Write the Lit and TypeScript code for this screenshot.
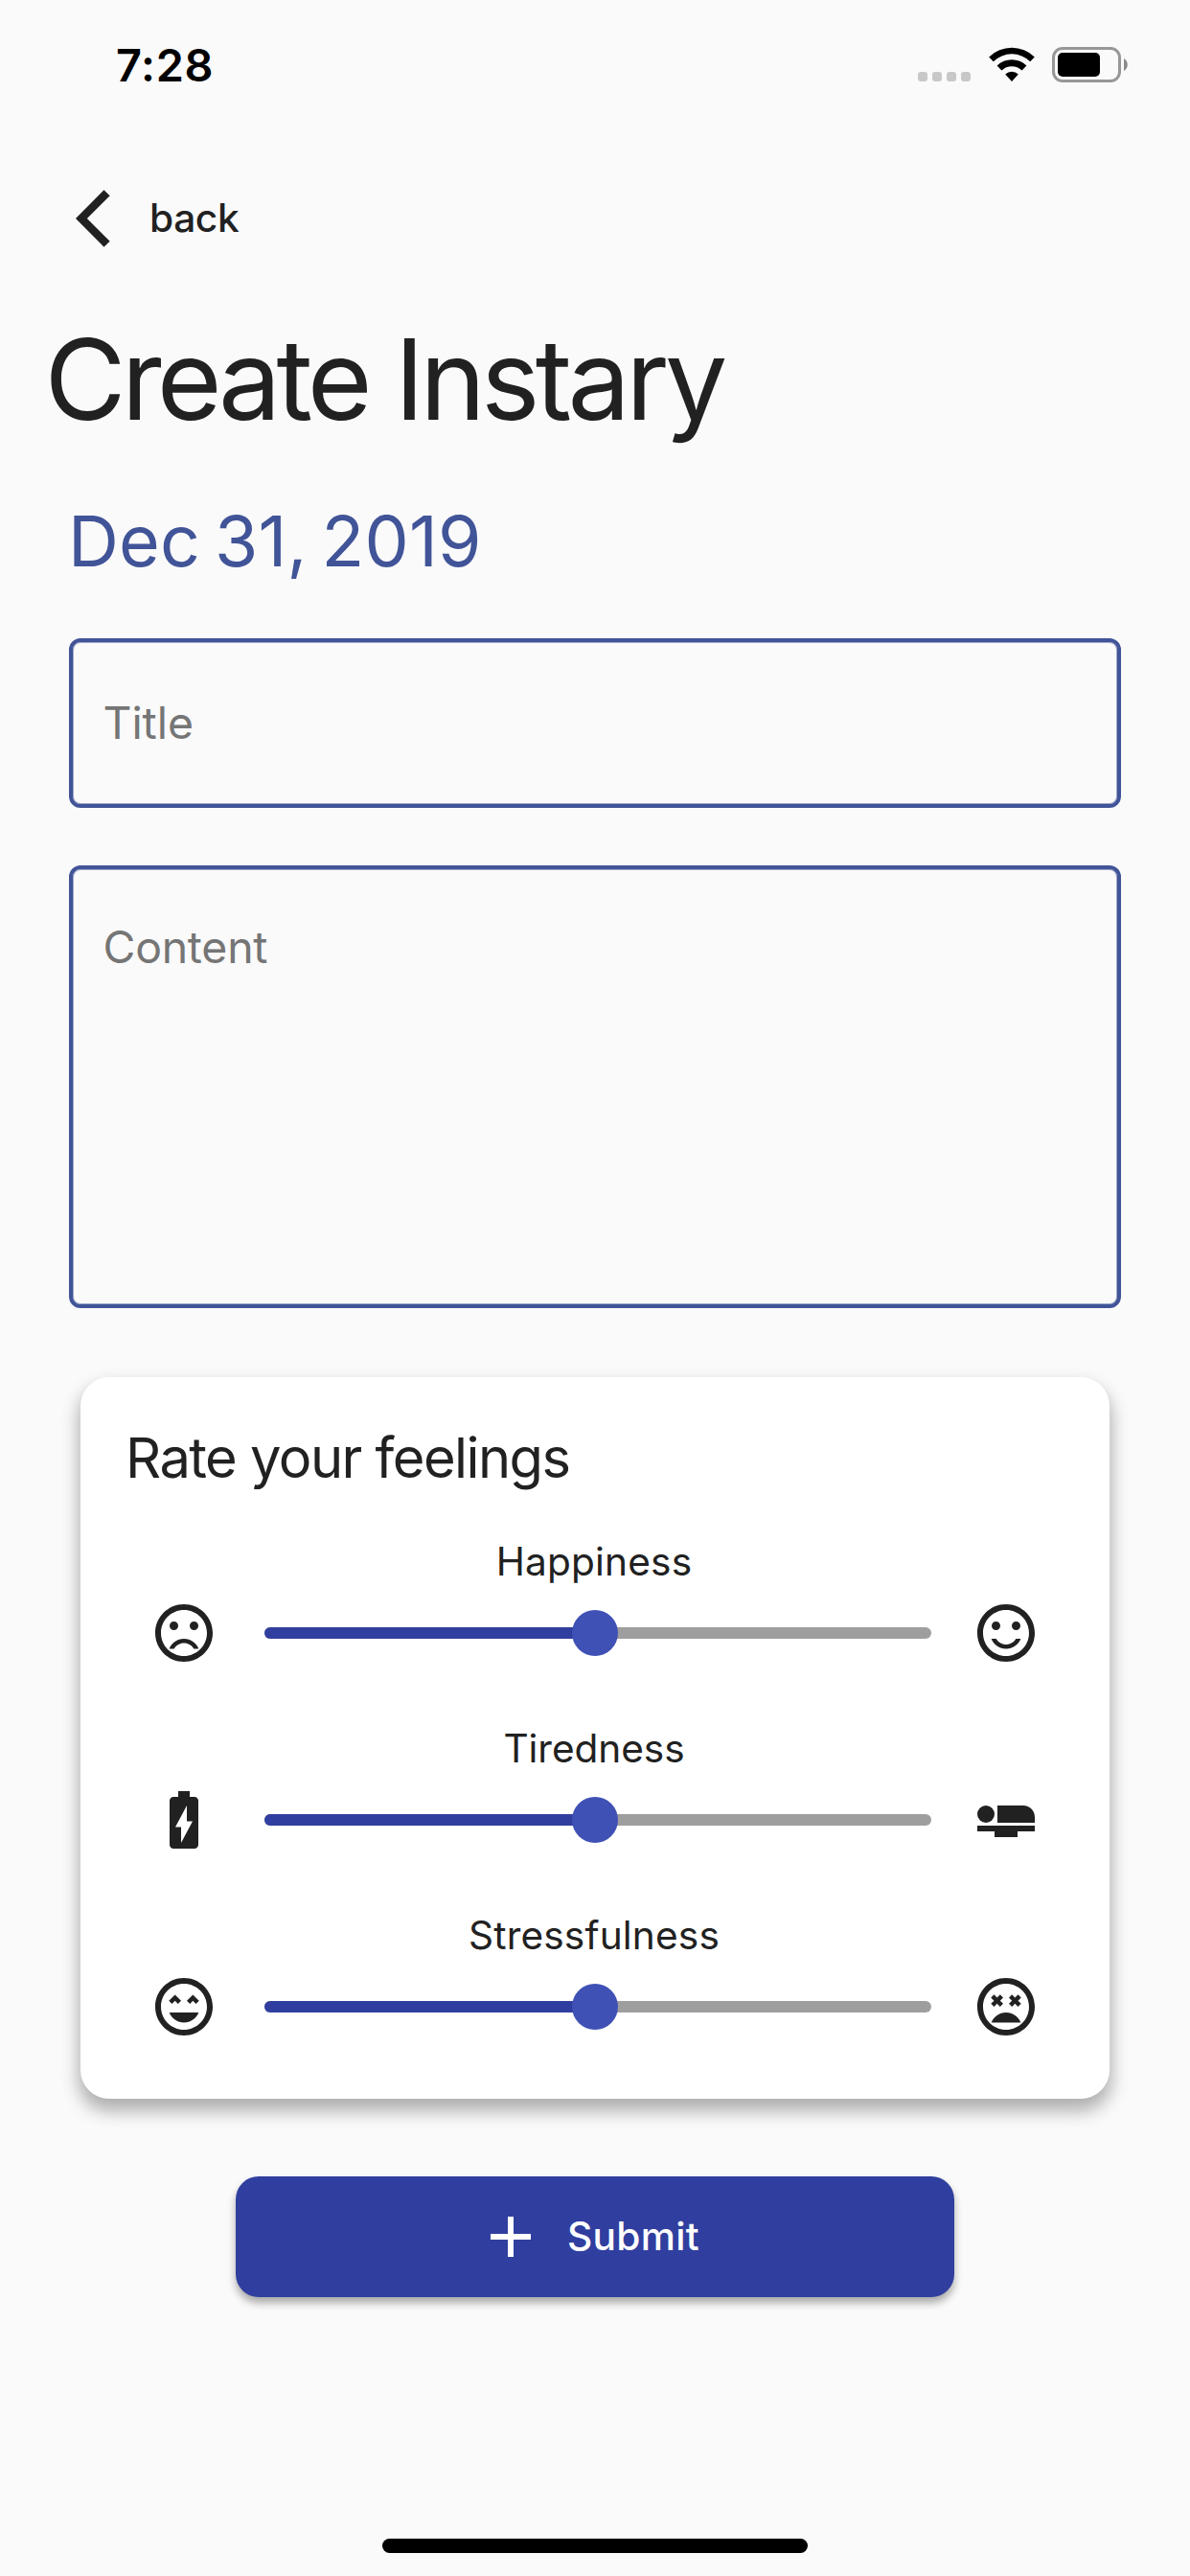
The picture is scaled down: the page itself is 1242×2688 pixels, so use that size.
import { LitElement, html, css, svg } from "lit";
import { customElement, property } from "lit/decorators.js";

const RING =
  "M11.99 2C6.47 2 2 6.48 2 12s4.47 10 9.99 10C17.52 22 22 17.52 22 12S17.52 2 11.99 2zM12 20c-4.42 0-8-3.58-8-8s3.58-8 8-8 8 3.58 8 8-3.58 8-8 8z";
const EYES =
  "M7 9.5a1.5 1.5 0 1 0 3 0a1.5 1.5 0 1 0 -3 0zM14 9.5a1.5 1.5 0 1 0 3 0a1.5 1.5 0 1 0 -3 0z";

const ICONS: Record<string, string[]> = {
  back: ["M11.88 4.05L9.83 2.12 0 12l9.83 9.88 2.05-1.93L3.95 12z"],
  add: ["M19 13h-6v6h-2v-6H5v-2h6V5h2v6h6v2z"],
  sad: [
    RING,
    EYES,
    "M12 14c-2.33 0-4.32 1.45-5.12 3.5h1.67c.69-1.19 1.97-2 3.45-2s2.75.81 3.45 2h1.67c-.8-2.05-2.79-3.5-5.12-3.5z",
  ],
  happy: [
    RING,
    EYES,
    "M12 16c-1.48 0-2.75-.81-3.45-2H6.88c.8 2.05 2.79 3.5 5.12 3.5s4.32-1.45 5.12-3.5h-1.67c-.7 1.19-1.97 2-3.45 2z",
  ],
  charged: [
    "M15.67 4H14V2h-4v2H8.33C7.6 4 7 4.6 7 5.33v15.33C7 21.4 7.6 22 8.33 22h7.33c.74 0 1.34-.6 1.34-1.33V5.33C17 4.6 16.4 4 15.67 4zM11 20v-5.5H9L13 7v5.5h2L11 20z",
  ],
  bed: [
    "M22 11v2H9V7h9c2.21 0 4 1.79 4 4zM2 14v2h6v2h8v-2h6v-2H2z",
    "M2 10a3 3 0 1 0 6 0a3 3 0 1 0 -6 0z",
  ],
  calm: [
    RING,
    "M13 9.94L14.06 11l1.06-1.06L16.18 11l1.06-1.06-2.12-2.12zM8.88 9.94L9.94 11 11 9.94 8.88 7.82 6.76 9.94 7.82 11z",
    "M12 17.5c2.33 0 4.31-1.46 5.11-3.5H6.89c.8 2.04 2.78 3.5 5.11 3.5z",
  ],
  stressed: [
    RING,
    "M16.18 7.76l-1.06 1.06-1.06-1.06L13 8.82l1.06 1.06L13 10.94 14.06 12l1.06-1.06L16.18 12l1.06-1.06-1.06-1.06 1.06-1.06zM7.82 12l1.06-1.06L9.94 12 11 10.94 9.94 9.88 11 8.82 9.94 7.76 8.88 8.82 7.82 7.76 6.76 8.82l1.06 1.06-1.06 1.06z",
    "M12 14c-2.33 0-4.31 1.46-5.11 3.5h10.22c-.8-2.04-2.78-3.5-5.11-3.5z",
  ],
};

@customElement("md-icon")
class MdIcon extends LitElement {
  @property() name = "";
  static styles = css`
    :host {
      display: block;
      flex: none;
      width: 72px;
      height: 72px;
    }
    .glyph {
      display: block;
      width: 72px;
      height: 72px;
      fill: currentColor;
    }
  `;
  render() {
    return html`<svg class="glyph" viewBox="0 0 24 24">
      ${(ICONS[this.name] ?? []).map((d) => svg`<path d=${d}></path>`)}
    </svg>`;
  }
}

@customElement("status-bar")
class StatusBar extends LitElement {
  static styles = css`
    :host {
      display: flex;
      justify-content: space-between;
      box-sizing: border-box;
      height: 132px;
      padding: 38px 64px 0 121px;
      color: #000;
    }
    .time {
      font-size: 46.8px;
      line-height: 60px;
      font-weight: 600;
      letter-spacing: 0.68px;
    }
    .indicators {
      display: flex;
      align-items: flex-start;
      padding-top: 11px;
    }
    .signal {
      display: flex;
      gap: 5px;
      padding-top: 26px;
    }
    .dot {
      width: 10px;
      height: 10px;
      border-radius: 3px;
      background: #c8c8c8;
    }
    .wifi {
      width: 48px;
      height: 36px;
      margin-left: 18.5px;
    }
    .battery {
      width: 80px;
      height: 37px;
      margin-left: 18.5px;
    }
  `;
  render() {
    return html`
      <div class="time">7:28</div>
      <div class="indicators">
        <div class="signal">
          ${[0, 1, 2, 3].map(() => html`<span class="dot"></span>`)}
        </div>
        <svg class="wifi" viewBox="0 0 48 36">
          <path d="M0.2 10.4A34 34 0 0 1 47.8 10.4L43.2 15.2A27.4 27.4 0 0 0 4.8 15.2Z"></path>
          <path d="M8.6 19.4A22.2 22.2 0 0 1 39.4 19.4L34.6 24.4A15.4 15.4 0 0 0 13.4 24.4Z"></path>
          <path d="M17.2 28.4A10.2 10.2 0 0 1 30.8 28.4L24 36Z"></path>
        </svg>
        <svg class="battery" viewBox="0 0 80 37">
          <rect x="1.5" y="1.5" width="69" height="34" rx="9.5" fill="none" stroke="#979797" stroke-width="3"></rect>
          <rect x="6" y="6" width="44" height="25" rx="5"></rect>
          <path d="M75 12C80 14.5 80 22.5 75 25Z" fill="#8a8a8a"></path>
        </svg>
      </div>
    `;
  }
}

@customElement("feeling-slider")
class FeelingSlider extends LitElement {
  @property() label = "";
  @property() low = "";
  @property() high = "";
  @property({ type: Number }) value = 50;
  @property({ type: Number }) tracking = 0;
  static styles = css`
    :host {
      display: block;
      height: 195px;
    }
    .label {
      height: 60px;
      padding-top: 1px;
      padding-right: 2px;
      line-height: 60px;
      font-size: 40.6px;
      text-align: center;
    }
    .row {
      display: flex;
      align-items: center;
      justify-content: space-between;
      height: 72px;
      margin-top: 8px;
      padding: 0 72px;
    }
    .track {
      display: flex;
      align-items: center;
      width: 696px;
      height: 12px;
      border-radius: 6px;
      background: #9e9e9e;
      margin-left: 6px;
    }
    .fill {
      height: 12px;
      border-radius: 6px 0 0 6px;
      background: #303f9f;
    }
    .thumb {
      flex: none;
      width: 48px;
      height: 48px;
      margin-left: -24px;
      border-radius: 50%;
      background: #3f51b5;
    }
  `;
  render() {
    return html`
      <div class="label" style="letter-spacing:${this.tracking}px">${this.label}</div>
      <div class="row">
        <md-icon name=${this.low}></md-icon>
        <div class="track">
          <div class="fill" style="width:${(this.value / 100) * 690}px"></div>
          <div class="thumb"></div>
        </div>
        <md-icon name=${this.high}></md-icon>
      </div>
    `;
  }
}

@customElement("app-root")
class AppRoot extends LitElement {
  static styles = css`
    :host {
      display: flex;
      flex-direction: column;
      box-sizing: border-box;
      width: 1242px;
      height: 2688px;
      overflow: hidden;
      background: #fafafa;
      color: #212121;
      font-family: Inter, "Liberation Sans", sans-serif;
    }
    .back {
      display: flex;
      align-items: center;
      height: 72px;
      margin: 60px 0 0 78.5px;
    }
    .back-label {
      margin-left: 5.5px;
      font-size: 40.7px;
      line-height: 70px;
      font-weight: 500;
      letter-spacing: -0.4px;
    }
    .heading {
      margin: 62px 0 0 46.5px;
      height: 140px;
      line-height: 140px;
      font-size: 116.4px;
      font-weight: 400;
      letter-spacing: -4.8px;
    }
    .date {
      margin: 49px 0 0 71px;
      height: 100px;
      line-height: 100px;
      font-size: 73.3px;
      letter-spacing: 0.2px;
      word-spacing: -6px;
      color: #415498;
    }
    .field {
      box-sizing: border-box;
      margin: 0 72px;
      padding: 0 31.5px;
      border: 4px solid #415498;
      border-radius: 12px;
      box-shadow: inset 0 0 0 1px rgba(65, 84, 152, 0.5);
      font-size: 46.4px;
      line-height: 60px;
      color: #757575;
    }
    .title {
      height: 177px;
      margin-top: 51px;
      padding-top: 54px;
      letter-spacing: -0.05px;
    }
    .content {
      height: 462px;
      margin-top: 60px;
      padding-top: 51px;
      letter-spacing: -0.25px;
    }
    .card {
      box-sizing: border-box;
      height: 753px;
      margin: 72px 84px 0;
      padding-top: 44px;
      border-radius: 30px;
      background: #fff;
      box-shadow: 0 11px 18px 2px rgba(0, 0, 0, 0.3);
    }
    .card-title {
      height: 80px;
      margin: 0 0 38px 47px;
      line-height: 80px;
      font-size: 57.8px;
      font-weight: 400;
      letter-spacing: -1.53px;
    }
    .submit {
      display: flex;
      align-items: center;
      align-self: center;
      box-sizing: border-box;
      width: 750px;
      height: 126px;
      margin-top: 81px;
      padding-left: 250.5px;
      border-radius: 24px;
      background: #303f9f;
      color: #fff;
      box-shadow: 0 6px 8px rgba(0, 0, 0, 0.33);
    }
    .submit-label {
      margin-left: 23.5px;
      font-size: 40.7px;
      line-height: 60px;
      font-weight: 550;
      letter-spacing: 0.27px;
    }
    .home-indicator {
      align-self: center;
      width: 444px;
      height: 15px;
      margin: auto 0 24px;
      border-radius: 7.5px;
      background: #000;
    }
  `;
  render() {
    return html`
      <status-bar></status-bar>
      <div class="back">
        <md-icon name="back"></md-icon>
        <span class="back-label">back</span>
      </div>
      <h1 class="heading">Create Instary</h1>
      <div class="date">Dec 31, 2019</div>
      <div class="field title">Title</div>
      <div class="field content">Content</div>
      <section class="card">
        <h2 class="card-title">Rate your feelings</h2>
        <feeling-slider label="Happiness" low="sad" high="happy" tracking="0.19"></feeling-slider>
        <feeling-slider label="Tiredness" low="charged" high="bed" tracking="-0.06"></feeling-slider>
        <feeling-slider label="Stressfulness" low="calm" high="stressed" tracking="0.18"></feeling-slider>
      </section>
      <div class="submit">
        <md-icon name="add"></md-icon>
        <span class="submit-label">Submit</span>
      </div>
      <div class="home-indicator"></div>
    `;
  }
}
